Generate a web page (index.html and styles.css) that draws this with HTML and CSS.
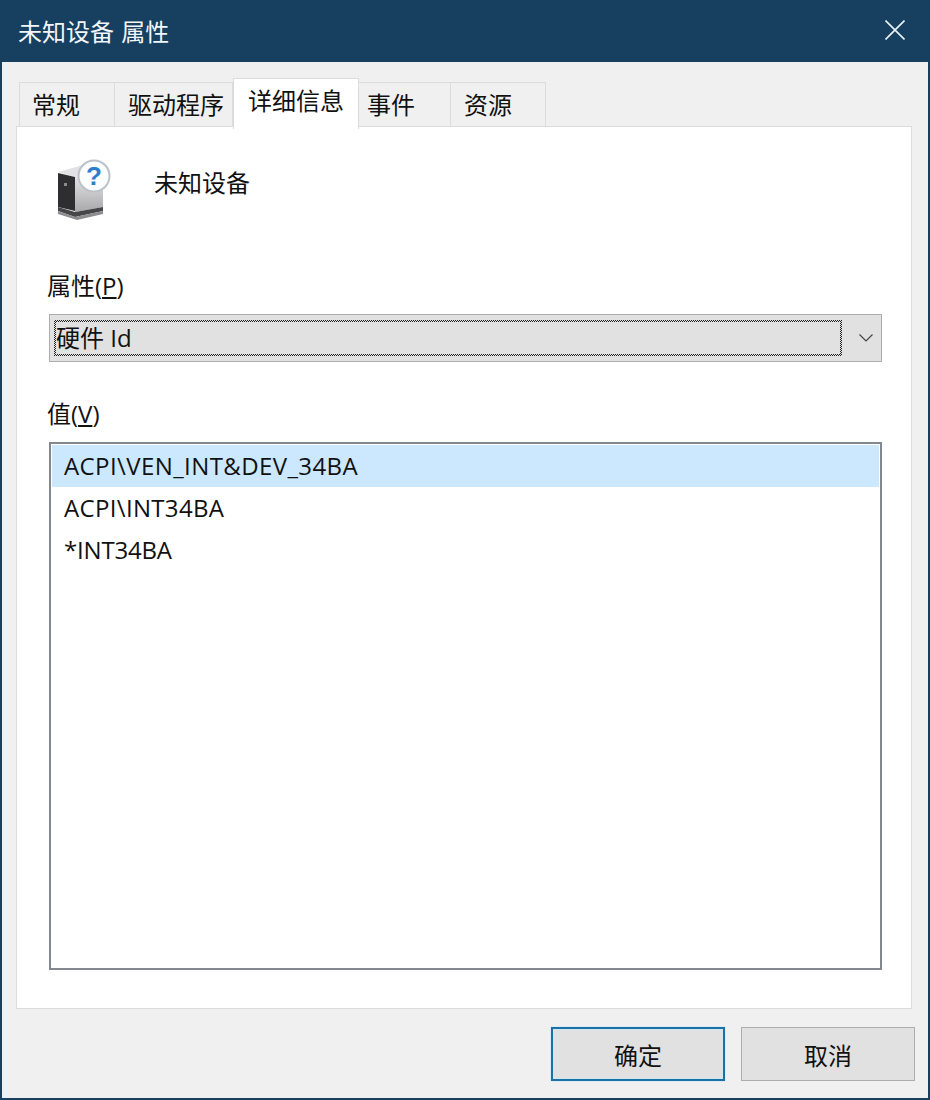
FILE: index.html
```html
<!DOCTYPE html>
<html lang="zh-CN">
<head>
    <meta charset="UTF-8">
    <title>未知设备 属性</title>
    <link rel="stylesheet" href="styles.css">
</head>
<body>
    <div class="window">
        <header class="titlebar">
            <span class="title">未知设备 属性</span>
            <svg class="close-icon" width="20" height="20" viewBox="0 0 20 20">
                <path d="M0.5 0.5L19.5 19.5M19.5 0.5L0.5 19.5" stroke="#e8f4fb" stroke-width="1.6" fill="none"/>
            </svg>
        </header>

        <div class="content">
            <div class="tabs">
                <div class="tab tab-general">常规</div>
                <div class="tab tab-driver">驱动程序</div>
                <div class="tab tab-active">详细信息</div>
                <div class="tab tab-events">事件</div>
                <div class="tab tab-resources">资源</div>
            </div>

            <div class="panel">
                <div class="device">
                    <svg class="device-icon" width="56" height="62" viewBox="0 0 56 62">
                        <defs>
                            <linearGradient id="towerSide" x1="0" y1="0" x2="0" y2="1">
                                <stop offset="0" stop-color="#e8e8ea"/>
                                <stop offset="1" stop-color="#a9a9ac"/>
                            </linearGradient>
                        </defs>
                        <path d="M3 13L28 6L48 14L20 18Z" fill="#e2e2e4"/>
                        <path d="M20 18L48 14V48L20 53Z" fill="url(#towerSide)"/>
                        <path d="M3 14L20 18V52L3 48Z" fill="#2e2d30"/>
                        <path d="M3 48L20 53L48 48V52L20 58L3 52Z" fill="#47474a"/>
                        <path d="M3 52L20 58L48 52V55L22 61L3 55Z" fill="#8d8d90"/>
                        <rect x="9" y="24" width="3" height="3" fill="#8a8a8a"/>
                        <circle cx="39" cy="17" r="15.5" fill="#fbfdff" stroke="#bcc2c8" stroke-width="2"/>
                        <text class="device-question" x="39" y="26" text-anchor="middle">?</text>
                    </svg>
                    <span class="device-name">未知设备</span>
                </div>

                <div class="field-label field-label-property">属性(<u>P</u>)</div>
                <div class="combo">
                    <div class="combo-value">硬件 Id</div>
                    <svg class="combo-arrow" width="14" height="8" viewBox="0 0 14 8">
                        <path d="M0.5 0.5L7 7L13.5 0.5" stroke="#444" stroke-width="1.2" fill="none"/>
                    </svg>
                </div>

                <div class="field-label field-label-value">值(<u>V</u>)</div>
                <div class="listbox">
                    <div class="list-row list-row-selected">ACPI\VEN_INT&amp;DEV_34BA</div>
                    <div class="list-row list-row-second">ACPI\INT34BA</div>
                    <div class="list-row list-row-third">*INT34BA</div>
                </div>
            </div>

            <div class="buttons">
                <button class="btn btn-default">确定</button>
                <button class="btn">取消</button>
            </div>
        </div>
    </div>
</body>
</html>
```

FILE: styles.css
```css
/* General Styles */
html, body {
    margin: 0;
    padding: 0;
}

body {
    width: 930px;
    height: 1100px;
    overflow: hidden;
    font-family: "Open Sans", "Noto Sans CJK SC", sans-serif;
    font-size: 24px;
    color: #111;
}

.window {
    box-sizing: border-box;
    width: 930px;
    height: 1100px;
    display: flex;
    flex-direction: column;
    background-color: #f0f0f0;
    border: 2px solid #173f60;
    border-top: none;
}

/* Title Bar */
.titlebar {
    flex: none;
    height: 62px;
    margin: 0 -2px;
    padding: 0 25px 0 18px;
    display: flex;
    align-items: center;
    justify-content: space-between;
    background-color: #173f60;
    color: #f2f6f9;
}

.title {
    font-size: 24px;
    line-height: 1;
    margin-top: 2px;
    word-spacing: 1px;
}

.close-icon {
    margin-top: -3px;
}

/* Tabs */
.content {
    flex: 1;
    padding: 16px 16px 0 14px;
}

.tabs {
    height: 49px;
    padding-left: 3px;
    display: flex;
    align-items: flex-start;
}

.tab {
    box-sizing: border-box;
    height: 45px;
    margin-top: 4px;
    padding-left: 13px;
    border: 1px solid #dcdcdc;
    border-left: none;
    background-color: #f0f0f0;
    line-height: 44px;
}

.tab-general {
    width: 96px;
    padding-left: 12px;
    border-left: 1px solid #dcdcdc;
}

.tab-driver {
    width: 118px;
}

.tab-active {
    position: relative;
    z-index: 1;
    width: 126px;
    height: 51px;
    margin-top: 0;
    padding-left: 14px;
    border-left: 1px solid #dcdcdc;
    border-bottom: none;
    background-color: #fff;
    line-height: 44px;
}

.tab-events {
    width: 92px;
    padding-left: 8px;
}

.tab-resources {
    width: 95px;
}

/* Panel */
.panel {
    box-sizing: border-box;
    height: 883px;
    margin-top: -1px;
    padding: 32px 29px 0 32px;
    background-color: #fff;
    border: 1px solid #dcdcdc;
}

.device {
    height: 62px;
    padding-left: 6px;
    display: flex;
    align-items: flex-start;
}

.device-icon {
    flex: none;
}

.device-name {
    margin-left: 43px;
    margin-top: 6px;
    line-height: 36px;
}

.device-question {
    font-family: "Liberation Sans", sans-serif;
    font-size: 26px;
    font-weight: bold;
    fill: #2f7fc8;
}

.field-label {
    margin-left: -2px;
    line-height: 36px;
}

.field-label-property {
    margin-top: 47px;
}

.field-label-value {
    margin-top: 34px;
}

/* Combo Box */
.combo {
    box-sizing: border-box;
    height: 48px;
    margin-top: 10px;
    padding: 5px 0 5px 4px;
    display: flex;
    align-items: center;
    background-color: #e1e1e1;
    border: 1px solid #adadad;
}

/* dotted focus box, drawn as a 1px checker */
.combo-value {
    box-sizing: border-box;
    flex: 1;
    height: 36px;
    line-height: 31px;
    padding-left: 0;
    border: 2px solid transparent;
    background: linear-gradient(#e1e1e1, #e1e1e1) padding-box,
        repeating-conic-gradient(#222 0 25%, #e1e1e1 0 50%) 0 0 / 2px 2px border-box;
}

.combo-arrow {
    flex: none;
    margin: 0 8px 0 17px;
}

/* List Box */
.listbox {
    box-sizing: border-box;
    height: 528px;
    margin-top: 10px;
    padding: 1px;
    background-color: #fff;
    border: 2px solid #828790;
}

.list-row {
    height: 42px;
    padding-left: 12px;
    line-height: 42px;
}

.list-row-selected {
    letter-spacing: 0.4px;
    background-color: #cce8ff;
}

.list-row-second {
    letter-spacing: 0.33px;
}

.list-row-third {
    letter-spacing: -0.2px;
}

/* Buttons */
.buttons {
    margin-top: 18px;
    margin-right: -3px;
    display: flex;
    justify-content: flex-end;
    gap: 16px;
}

.btn {
    box-sizing: border-box;
    width: 174px;
    height: 54px;
    padding: 0;
    font-family: inherit;
    font-size: 24px;
    color: #111;
    background-color: #e1e1e1;
    border: 1px solid #adadad;
}

.btn-default {
    border: 2px solid #1a72a4;
    box-shadow: inset 0 0 0 1px #cfe6f4, 0 0 0 1px #dcebf5;
}
```
